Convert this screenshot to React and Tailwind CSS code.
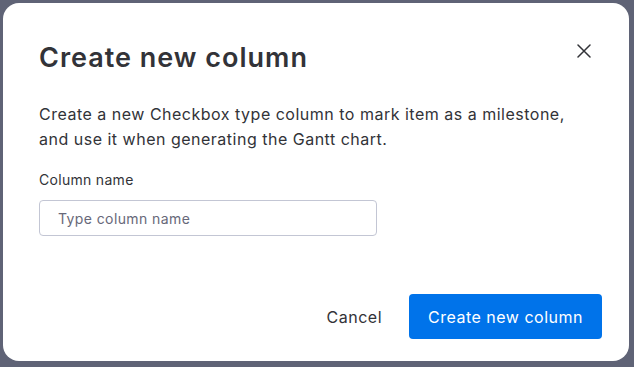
import React from 'react';

const App = () => {
    return (
        <div className="w-[634px] h-[367px] bg-[#5f6376] p-[3px] pr-[5px] pb-[6px]" style={{ fontFamily: 'Inter, "Noto Sans", sans-serif' }}>
            <div className="relative w-full h-full bg-white rounded-2xl flex flex-col pl-9 pr-[27px] pt-[38px] pb-[22px] text-[#323338]">
                <button className="absolute right-[38px] top-[41px] w-[14px] h-[14px] flex items-center justify-center text-[#323338]">
                    <svg width="14" height="14" viewBox="0 0 14 14" fill="none" stroke="currentColor" strokeWidth="1.5" strokeLinecap="round">
                        <path d="M1 1L13 13M13 1L1 13" />
                    </svg>
                </button>

                <h2 className="text-[27px] font-semibold leading-[34px] tracking-[1px] text-[#323338]">Create new column</h2>

                <p className="mt-[27px] text-[16px] leading-[25px] tracking-[0.5px] text-[#323338]">
                    Create a new Checkbox type column to mark item as a milestone,<br />
                    and use it when generating the Gantt chart.
                </p>

                <label className="mt-[18px] text-[14px] leading-5 tracking-[0.3px] text-[#323338]">Column name</label>
                <input
                    type="text"
                    placeholder="Type column name"
                    className="mt-[10px] w-[338px] h-[36px] border border-[#c3c6d4] rounded px-[18px] text-[14px] tracking-[0.4px] placeholder-[#676879] outline-none"
                />

                <div className="mt-auto flex items-center justify-end gap-[27px]">
                    <button className="text-[16px] tracking-[0.5px] text-[#323338] px-0">Cancel</button>
                    <button className="h-[45px] px-[19px] bg-[#0073ea] text-white text-[16px] tracking-[0.5px] rounded">Create new column</button>
                </div>
            </div>
        </div>
    );
};

export default App;
